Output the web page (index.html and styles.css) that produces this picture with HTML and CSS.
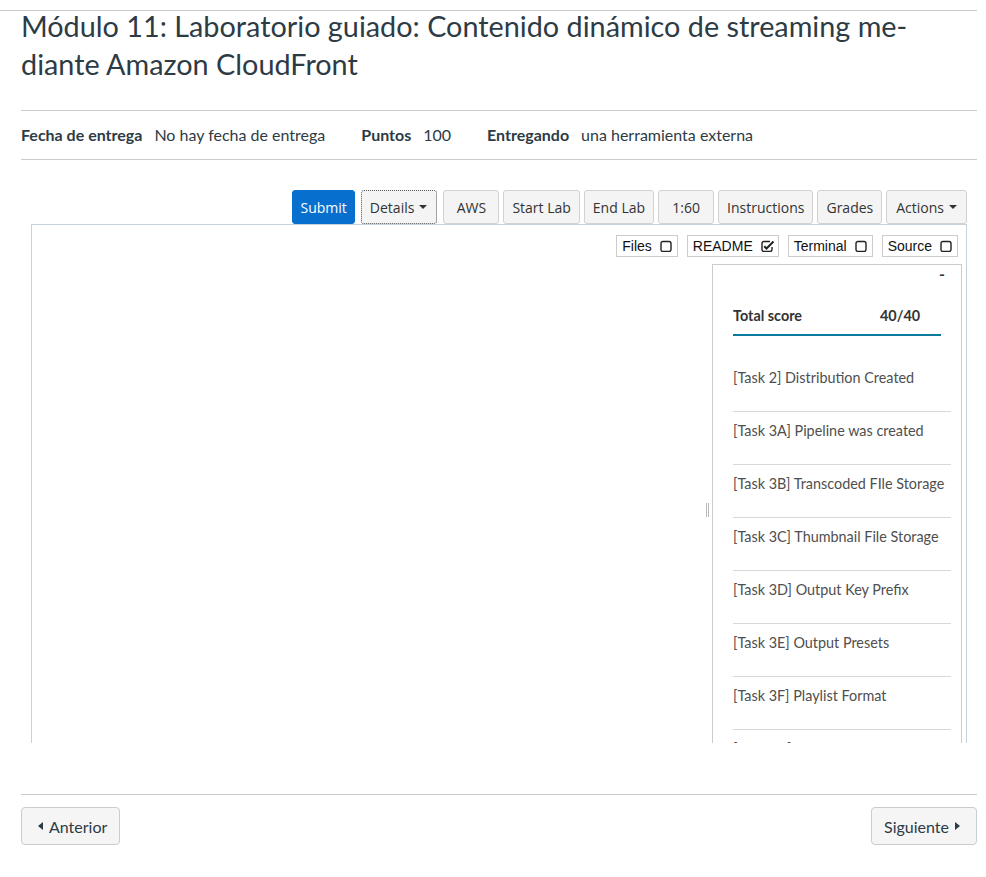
FILE: index.html
```html
<!DOCTYPE html>
<html lang="es">
<head>
<meta charset="utf-8">
<title>Módulo 11</title>
<link rel="stylesheet" href="styles.css">
</head>
<body>
<div class="topbar"></div>
<div class="page">
  <h1 class="title">Módulo 11: Laboratorio guiado: Contenido dinámico de streaming me-<br>diante Amazon CloudFront</h1>

  <div class="details">
    <span class="lbl">Fecha de entrega</span><span class="val">No hay fecha de entrega</span>
    <span class="lbl">Puntos</span><span class="val">100</span>
    <span class="lbl">Entregando</span><span class="val">una herramienta externa</span>
  </div>

  <div class="lab">
    <div class="toolbar">
      <button class="btn btn-primary">Submit</button>
      <button class="btn btn-focus btn-drop">Details <span class="caret"></span></button>
      <button class="btn btn-min">AWS</button>
      <button class="btn">Start Lab</button>
      <button class="btn">End Lab</button>
      <button class="btn btn-min">1:60</button>
      <button class="btn">Instructions</button>
      <button class="btn">Grades</button>
      <button class="btn btn-drop">Actions <span class="caret"></span></button>
    </div>
    <div class="frame">
      <div class="toggles">
        <span class="tog">Files <svg class="cb" viewBox="0 0 12 12"><rect x="1" y="1.5" width="10" height="10" rx="2" fill="none" stroke="#222" stroke-width="1.4"/></svg></span>
        <span class="tog tog-checked">README <svg class="cb cb-wide" viewBox="0 0 14 12"><path d="M9 1.5H3a2 2 0 0 0-2 2v6a2 2 0 0 0 2 2h6a2 2 0 0 0 2-2V7" fill="none" stroke="#222" stroke-width="1.4"/><path d="M3.2 6.2l2.3 2.3L12.5 1.5" fill="none" stroke="#222" stroke-width="2"/></svg></span>
        <span class="tog">Terminal <svg class="cb" viewBox="0 0 12 12"><rect x="1" y="1.5" width="10" height="10" rx="2" fill="none" stroke="#222" stroke-width="1.4"/></svg></span>
        <span class="tog">Source <svg class="cb" viewBox="0 0 12 12"><rect x="1" y="1.5" width="10" height="10" rx="2" fill="none" stroke="#222" stroke-width="1.4"/></svg></span>
      </div>
      <div class="panes">
        <div class="left-pane"></div>
        <div class="gutter"><span class="handle"></span></div>
        <div class="score">
          <div class="collapse">-</div>
          <div class="total"><span>Total score</span><span>40/40</span></div>
          <ul class="tasks">
            <li>[Task 2] Distribution Created</li>
            <li>[Task 3A] Pipeline was created</li>
            <li>[Task 3B] Transcoded FIle Storage</li>
            <li>[Task 3C] Thumbnail File Storage</li>
            <li>[Task 3D] Output Key Prefix</li>
            <li>[Task 3E] Output Presets</li>
            <li>[Task 3F] Playlist Format</li>
            <li>[Task 3G] Playlist Name</li>
          </ul>
        </div>
      </div>
    </div>
  </div>

  <div class="footer">
    <a class="navbtn" href="#"><svg class="tri" viewBox="0 0 5 8"><path d="M5 0v8L0 4z" fill="#2d3b45"/></svg>Anterior</a>
    <a class="navbtn" href="#">Siguiente<svg class="tri" viewBox="0 0 5 8"><path d="M0 0v8l5-4z" fill="#2d3b45"/></svg></a>
  </div>
</div>
</body>
</html>
```

FILE: styles.css
```css
html, body {
  margin: 0;
  padding: 0;
  background: #fff;
}
body {
  font-family: Lato, "Noto Sans", sans-serif;
  color: #2d3b45;
}
.topbar {
  width: 977px;
  height: 10px;
  border-bottom: 1px solid #c7cdd1;
}
.page {
  margin-left: 21px;
  width: 956px;
}
.title {
  font-family: Lato, sans-serif;
  font-weight: 400;
  font-size: 28.8px;
  line-height: 38px;
  margin: -4px 0 0 0;
  color: #2d3b45;
}
.details {
  margin-top: 27px;
  border-top: 1px solid #c7cdd1;
  border-bottom: 1px solid #c7cdd1;
  height: 46px;
  padding-bottom: 2px;
  display: flex;
  align-items: center;
  font-size: 16px;
}
.details .lbl {
  font-weight: 700;
  margin-right: 12px;
}
.details .val {
  margin-right: 36px;
}
.lab {
  margin: 30px 10px 0 10px;
}
.toolbar {
  display: flex;
  justify-content: flex-end;
  gap: 4px;
}
.btn {
  font-family: "Open Sans", sans-serif;
  font-size: 14px;
  color: #333;
  background: #f4f4f4;
  border: 1px solid #d2d2d2;
  border-radius: 3px;
  height: 34px;
  padding: 0 8px;
  display: inline-flex;
  align-items: center;
  justify-content: center;
  gap: 4px;
}
.btn-drop {
  gap: 5px;
  padding: 0 9px 0 9px;
}
.btn-primary {
  background: #0770cf;
  border-color: #0770cf;
  color: #fff;
  margin-right: 2px;
  padding: 0 7px 0 8px;
}
.btn-focus {
  border: 1px dotted #555;
  margin-right: 2px;
  padding: 0 9px 0 8px;
}
.btn-min {
  min-width: 56px;
}
.caret {
  display: inline-block;
  width: 0;
  height: 0;
  border-left: 4px solid transparent;
  border-right: 4px solid transparent;
  border-top: 4px solid #333;
}
.frame {
  border: 1px solid #c7d2da;
  border-bottom: none;
  height: 518px;
  overflow: hidden;
}
.toggles {
  display: flex;
  justify-content: flex-end;
  gap: 9px;
  padding: 10px 8px 0 0;
}
.tog {
  font-family: "Liberation Sans", Arial, sans-serif;
  font-size: 14px;
  color: #111;
  border: 1px solid #ccc;
  height: 20px;
  padding: 0 5px 0 5px;
  display: inline-flex;
  align-items: center;
  gap: 8px;
}
.tog-checked {
  padding-right: 3px;
}
.cb {
  width: 12px;
  height: 12px;
}
.cb-wide {
  width: 14px;
}
.panes {
  display: flex;
  margin-top: 7px;
  height: 520px;
}
.left-pane {
  flex: 1;
}
.gutter {
  width: 9px;
  display: flex;
  align-items: center;
  padding-bottom: 29px;
  box-sizing: border-box;
}
.handle {
  width: 1px;
  height: 14px;
  border-left: 1px solid #bbb;
  border-right: 1px solid #bbb;
  margin-left: 3px;
}
.score {
  width: 248px;
  border: 1px solid #ccc;
  margin-right: 4px;
}
.collapse {
  text-align: right;
  padding-right: 16px;
  font-weight: 700;
  font-size: 16px;
  line-height: 18px;
  height: 41px;
  color: #333;
}
.total {
  display: grid;
  grid-template-columns: 147px auto;
  margin: 0 20px;
  font-size: 14.4px;
  font-weight: 700;
  line-height: 20px;
  padding-bottom: 8px;
  border-bottom: 2px solid #0c7a9e;
  color: #333;
}
.tasks {
  list-style: none;
  margin: 23px 10px 0 20px;
  padding: 0;
}
.tasks li {
  font-size: 14.4px;
  line-height: 20px;
  color: #4f4f4f;
  padding: 9px 0 23px 0;
  border-bottom: 1px solid #d5d9dc;
}
.footer {
  margin-top: 51px;
  border-top: 1px solid #c7cdd1;
  padding-top: 12px;
  display: flex;
  justify-content: space-between;
}
.navbtn {
  display: inline-flex;
  align-items: center;
  gap: 6px;
  height: 36px;
  padding: 0 12px 0 16px;
  background: #f5f5f5;
  border: 1px solid #c7cdd1;
  border-radius: 4px;
  font-size: 16px;
  color: #2d3b45;
  text-decoration: none;
}
.navbtn:last-child {
  padding: 0 16px 0 12px;
}
.tri {
  width: 5px;
  height: 8px;
}
```
